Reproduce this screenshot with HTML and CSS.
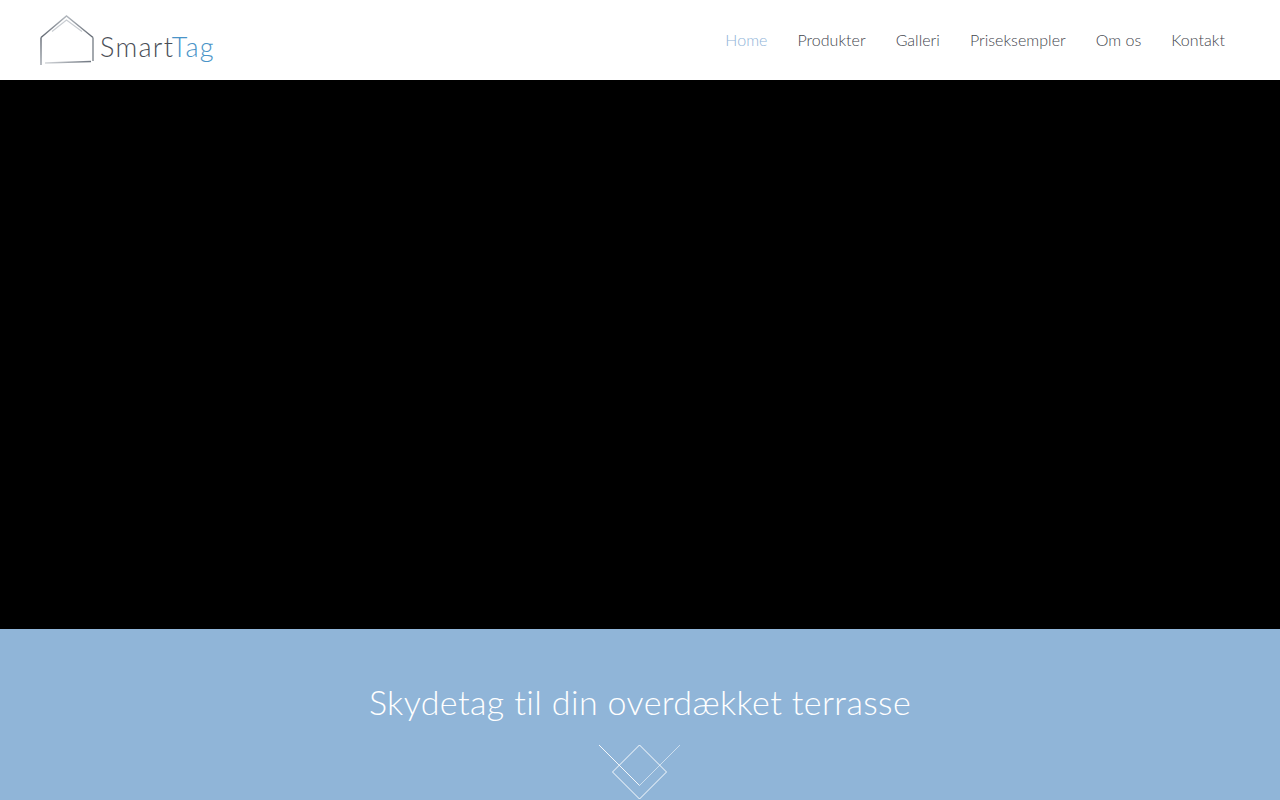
FILE: index.html
```html
<!DOCTYPE html>
<html lang="da">
<head>
<meta charset="utf-8">
<title>SmartTag</title>
<link rel="stylesheet" href="styles.css">
</head>
<body>
<header class="header">
  <a class="logo" href="#">
    <svg class="logo-mark" width="55" height="50" viewBox="0 0 55 50" fill="none">
      <defs>
        <linearGradient id="wallLeft" gradientUnits="userSpaceOnUse" x1="0" y1="22" x2="0" y2="50">
          <stop offset="0" stop-color="#5f6670"/>
          <stop offset="1" stop-color="#9aa0a8"/>
        </linearGradient>
        <linearGradient id="roof" x1="0" y1="1" x2="0" y2="0">
          <stop offset="0" stop-color="#5f6670"/>
          <stop offset="1" stop-color="#b4b9bf"/>
        </linearGradient>
        <linearGradient id="floor" x1="0" y1="0" x2="1" y2="0">
          <stop offset="0" stop-color="#d5d8db"/>
          <stop offset="1" stop-color="#6f7680"/>
        </linearGradient>
      </defs>
      <path d="M1 22.5L26.5 1L53 22.5" stroke="url(#roof)" stroke-width="1.4"/>
      <path d="M12 16.5L26.5 5L42 16.5" stroke="#c9cdd2" stroke-width="1.2"/>
      <path d="M1 22.5V50" stroke="url(#wallLeft)" stroke-width="1.4"/>
      <path d="M53 22.5V46" stroke="#7d848c" stroke-width="1.4"/>
      <path d="M5 48L51 46.5" stroke="url(#floor)" stroke-width="1.4"/>
    </svg>
    <span class="logo-text">Smart<span class="logo-accent">Tag</span></span>
  </a>
  <nav class="nav">
    <a class="nav-link is-active" href="#">Home</a>
    <a class="nav-link" href="#">Produkter</a>
    <a class="nav-link" href="#">Galleri</a>
    <a class="nav-link" href="#">Priseksempler</a>
    <a class="nav-link" href="#">Om os</a>
    <a class="nav-link" href="#">Kontakt</a>
  </nav>
</header>
<main>
  <section class="video"></section>
  <section class="intro">
    <h1 class="intro-title">Skydetag til din overdækket terrasse</h1>
    <svg class="ornament" width="84" height="55" viewBox="0 0 84 55" fill="none">
      <path d="M1 1L41.5 41.5" stroke="#fff" stroke-opacity=".9"/>
      <path d="M41.5 41.5L82 1" stroke="#fff" stroke-opacity=".55"/>
      <path d="M41.5 1L68.5 28L41.5 55L14.5 28Z" stroke="#fff" stroke-opacity=".95"/>
    </svg>
  </section>
</main>
</body>
</html>
```
FILE: styles.css
```css
* { box-sizing: border-box; }
html, body { margin: 0; height: 800px; overflow: hidden; }
body { font-family: "Lato", "Open Sans", sans-serif; background: #fff; }
.header {
  height: 80px;
  display: flex;
  align-items: center;
  justify-content: space-between;
  padding: 0 40px;
  background: #fff;
}
.logo { display: flex; align-items: flex-end; text-decoration: none; }
.logo-mark { display: block; }
.logo-text {
  margin-left: 5px;
  margin-bottom: 3px;
  font-size: 27px;
  line-height: 30px;
  font-weight: 300;
  letter-spacing: 1.3px;
  color: #4a4f57;
}
.logo-accent { color: #4a94c8; }
.nav { display: flex; gap: 30px; padding-right: 15px; }
.nav-link {
  font-size: 16px;
  line-height: 24px;
  font-weight: 300;
  letter-spacing: .03px;
  color: #3f454d;
  text-decoration: none;
}
.nav-link.is-active { color: #8fb4d8; }
.video { height: 549px; background: #000; }
.intro {
  height: 171px;
  background: #90b5d8;
  display: flex;
  flex-direction: column;
  align-items: center;
  padding-top: 50px;
}
.intro-title {
  margin: 0;
  font-size: 34px;
  line-height: 46px;
  font-weight: 300;
  color: #fff;
  letter-spacing: .4px;
}
.ornament { display: block; margin-top: 19px; }
```
